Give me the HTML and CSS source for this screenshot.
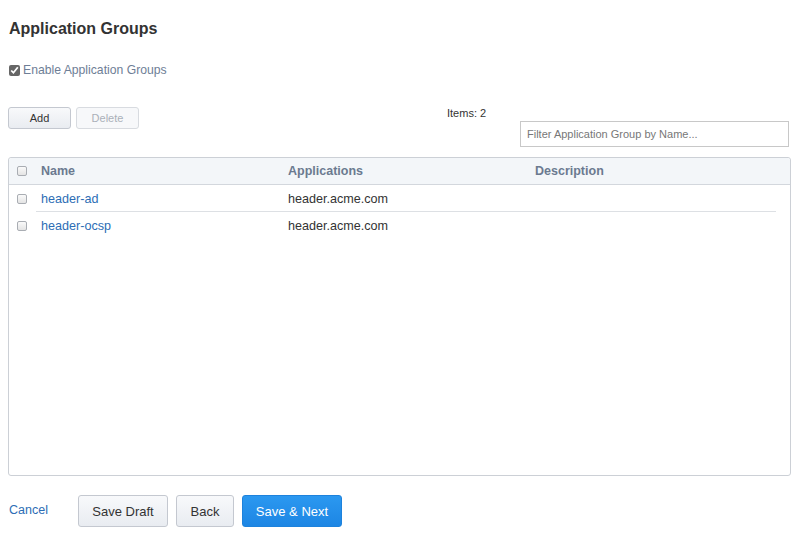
FILE: index.html
```html
<!DOCTYPE html>
<html>
<head>
<meta charset="utf-8">
<link rel="stylesheet" href="styles.css">
</head>
<body>
<div class="page">
  <h1 class="title">Application Groups</h1>
  <label class="enable"><input type="checkbox" class="cb" checked> <span>Enable Application Groups</span></label>
  <div class="toolbar">
    <div class="btns">
      <button class="btn small">Add</button>
      <button class="btn small disabled">Delete</button>
    </div>
    <div class="right">
      <div class="items">Items: 2</div>
      <input class="filter" type="text" placeholder="Filter Application Group by Name...">
    </div>
  </div>
  <div class="table">
    <div class="thead">
      <div class="c0"><span class="box"></span></div>
      <div class="c1">Name</div>
      <div class="c2">Applications</div>
      <div class="c3">Description</div>
    </div>
    <div class="row">
      <div class="c0"><span class="box"></span></div>
      <div class="c1"><a class="link">header-ad</a></div>
      <div class="c2">header.acme.com</div>
      <div class="c3"></div>
    </div>
    <div class="row last">
      <div class="c0"><span class="box"></span></div>
      <div class="c1"><a class="link">header-ocsp</a></div>
      <div class="c2">header.acme.com</div>
      <div class="c3"></div>
    </div>
  </div>
  <div class="footer">
    <a class="cancel">Cancel</a>
    <button class="btn big">Save Draft</button>
    <button class="btn big">Back</button>
    <button class="btn big primary">Save &amp; Next</button>
  </div>
</div>
</body>
</html>
```
FILE: styles.css
```css
* { box-sizing: border-box; }
html, body { margin: 0; padding: 0; background: #fff; }
body { font-family: "Liberation Sans", Arial, sans-serif; color: #333; }
.page { padding: 0 18px 0 8px; width: 809px; }
.title { font-size: 16px; font-weight: bold; color: #333; margin: 0; padding: 19px 0 0 1px; line-height: 20px; }
.enable { display: flex; align-items: center; margin-top: 24px; padding-left: 1px; font-size: 12.2px; color: #6e7e96; }
.enable span { margin-left: 3px; }
.cb { width: 11px; height: 11px; margin: 0; accent-color: #666; }
.toolbar { display: flex; justify-content: space-between; margin-top: 30px; height: 50px; }
.btns { display: flex; gap: 5px; align-items: flex-start; }
.btn { font-family: "Liberation Sans", Arial, sans-serif; border: 1px solid #c4c8d0; border-radius: 3px; background: linear-gradient(#f8f9fb, #e9ecf1); color: #333; cursor: pointer; padding: 0; }
.btn.small { width: 63px; height: 22px; font-size: 11px; }
.btn.small.disabled { background: #f7f8fa; color: #aab0b9; border-color: #d8dbe0; }
.right { position: relative; width: 269px; margin-right: 2px; }
.items { position: absolute; left: -73px; top: 0; font-size: 11px; color: #333; }
.filter { position: absolute; left: 0; top: 14px; width: 269px; height: 26px; border: 1px solid #c8c8c8; font-family: "Liberation Sans", Arial, sans-serif; font-size: 11px; padding: 0 6px; color: #333; outline: none; }
.filter::placeholder { color: #777; }
.table { border: 1px solid #ccd0d6; border-radius: 3px; height: 319px; width: 783px; }
.thead, .row { display: grid; grid-template-columns: 28px 251px 247px 1fr; align-items: center; }
.thead { height: 27px; background: #f3f6f9; border-bottom: 1px solid #d3d7dd; font-size: 12.5px; font-weight: bold; color: #6b7a90; border-radius: 3px 3px 0 0; }
.row { height: 27px; font-size: 12.6px; color: #333; position: relative; }
.row::after { content: ""; position: absolute; left: 27px; right: 14px; bottom: 0; height: 1px; background: #dde0e4; }
.row.last::after { display: none; }
.c0 { display: flex; justify-content: flex-start; padding-left: 8px; }
.c1 { padding-left: 4px; }
.box { display: block; width: 10px; height: 10px; border: 1px solid #a9adb3; border-radius: 2px; background: linear-gradient(#fafafa, #e4e4e4); }
.link { color: #2d6db5; text-decoration: none; }
.footer { display: flex; align-items: center; margin-top: 19px; height: 32px; }
.cancel { color: #2d6db5; font-size: 12.5px; padding-left: 1px; width: 70px; position: relative; top: -1px; }
.btn.big { height: 32px; font-size: 13px; margin-right: 8px; color: #333; }
.btn.big:nth-of-type(1) { width: 90px; }
.btn.big:nth-of-type(2) { width: 58px; }
.btn.primary { width: 100px; background: linear-gradient(#2b98f0, #1d86e4); border-color: #1d82dc; color: #fff; }
```
